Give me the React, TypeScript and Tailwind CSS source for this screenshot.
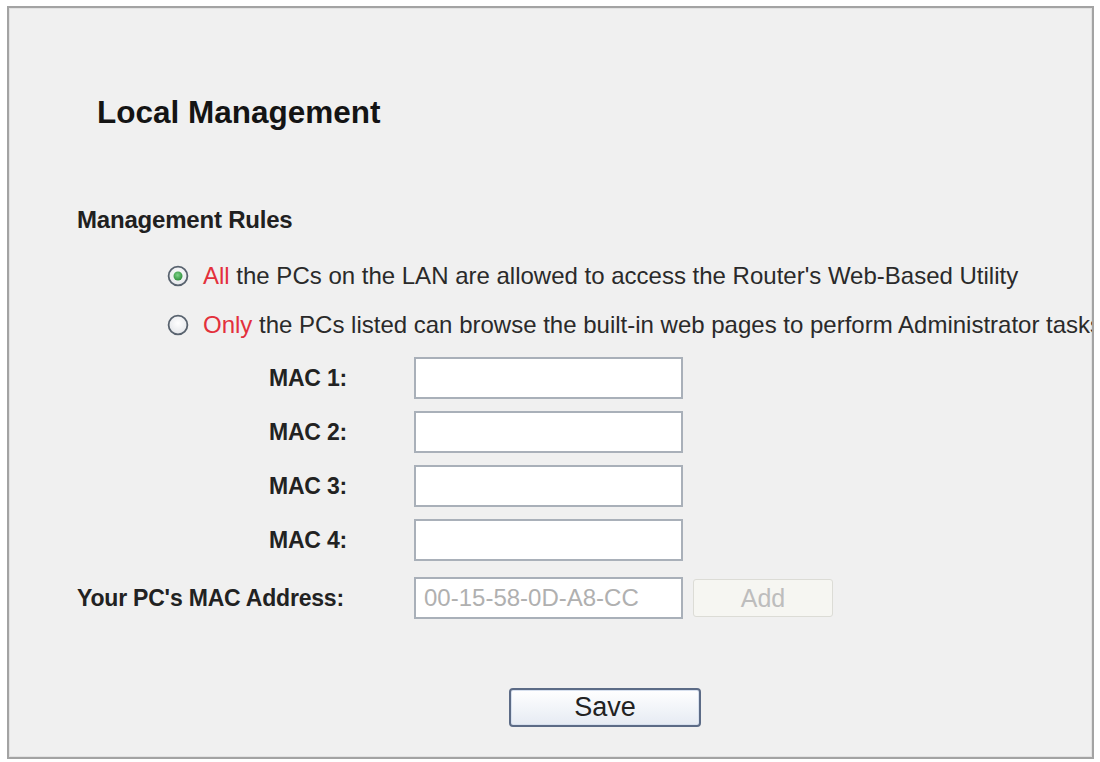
import { useState } from "react";

// Radio bullet drawn like the classic XP style control
const Radio = ({ checked, onClick }: { checked: boolean; onClick: () => void }) => (
   <button type="button" onClick={onClick} className="h-[22px] w-[22px] shrink-0">
      <svg width="22" height="22" viewBox="0 0 22 22">
         <defs>
            <radialGradient id="radioFill" cx="50%" cy="40%" r="60%">
               <stop offset="0%" stopColor="#ffffff" />
               <stop offset="100%" stopColor="#e4e6ea" />
            </radialGradient>
            <radialGradient id="radioDot" cx="45%" cy="40%" r="60%">
               <stop offset="0%" stopColor="#7fd48a" />
               <stop offset="100%" stopColor="#2f8f3c" />
            </radialGradient>
         </defs>
         <circle cx="11" cy="11" r="9.4" fill="url(#radioFill)" stroke="#58626e" strokeWidth="1.8" />
         {checked && <circle cx="11" cy="11" r="4.5" fill="url(#radioDot)" />}
      </svg>
   </button>
);

const macRows = ["MAC 1:", "MAC 2:", "MAC 3:", "MAC 4:"];

export default function App() {
   // 0 = everyone on the LAN, 1 = only listed PCs
   const [rule, setRule] = useState(0);
   const [macs, setMacs] = useState(["", "", "", ""]);

   return (
      <div className="h-[762px] w-[1100px] bg-white pl-[7px] pt-[6px] font-['Liberation_Sans',Arial,sans-serif] text-[#222]">
         <div className="h-[753px] w-[1087px] overflow-hidden border-2 border-[#a3a3a3] bg-[#f0f0f0] shadow-[inset_0_0_0_1px_#e2e2e2]">
            {/* Page title */}
            <div className="mt-[80px] flex h-[50px] items-center pl-[88px] text-[31.5px] font-bold text-[#141414]">
               Local Management
            </div>

            <div className="mt-[62px] flex h-[40px] items-center pl-[68px] text-[24px] font-bold tracking-[-0.2px] text-[#202020]">
               Management Rules
            </div>

            {/* Access rule radios */}
            <div className="mt-[16px] flex h-[40px] items-center whitespace-nowrap pl-[158px] text-[24px] text-[#2a2a2a]">
               <Radio checked={rule == 0} onClick={() => setRule(0)} />
               <span className="ml-[14px]">
                  <span className="text-[#e3303c]">All</span> the PCs on the LAN are allowed to access the Router's Web-Based Utility
               </span>
            </div>
            <div className="mt-[9px] flex h-[40px] items-center whitespace-nowrap pl-[158px] text-[24px] text-[#2a2a2a]">
               <Radio checked={rule == 1} onClick={() => setRule(1)} />
               <span className="ml-[14px]">
                  <span className="text-[#e3303c]">Only</span> the PCs listed can browse the built-in web pages to perform Administrator tasks
               </span>
            </div>

            {/* MAC list */}
            <div className="mt-[12px] flex flex-col gap-[12px] pl-[68px]">
               {macRows.map((label, i) => (
                  <div key={label} className="flex h-[42px] items-center">
                     <div className="w-[270px] text-right text-[23px] font-bold tracking-[-0.2px] text-[#222]">
                        {label}
                     </div>
                     <input
                        aria-label={label}
                        value={macs[i]}
                        onChange={(e) => {
                           const next = [...macs];
                           next[i] = e.target.value;
                           setMacs(next);
                        }}
                        className="ml-[67px] h-[42px] w-[269px] border-2 border-[#a9b0b9] bg-white px-2 text-[24px] outline-none"
                     />
                  </div>
               ))}
            </div>

            <div className="mt-[16px] flex h-[42px] items-center pl-[68px]">
               <div className="w-[270px] whitespace-nowrap text-[23px] font-bold tracking-[-0.2px] text-[#222]">
                  Your PC's MAC Address:
               </div>
               <div className="ml-[67px] flex h-[42px] w-[269px] items-center border-2 border-[#a9b0b9] bg-white pl-[8px] text-[24px] text-[#b0b0b0]">
                  00-15-58-0D-A8-CC
               </div>
               <button
                  type="button"
                  disabled
                  className="ml-[10px] h-[38px] w-[140px] rounded-[3px] border border-[#dcdcd6] bg-[#f6f6f2] text-[25px] text-[#bdbdbd]"
               >
                  Add
               </button>
            </div>

            <div className="mt-[69px] pl-[500px]">
               <button
                  type="button"
                  className="h-[39px] w-[192px] rounded-[4px] border-2 border-[#5c6b86] bg-gradient-to-b from-white to-[#e6ebf3] text-[27px] leading-none text-[#222] shadow-[inset_0_0_0_1px_#d7e0ee]"
               >
                  Save
               </button>
            </div>
         </div>
      </div>
   );
}
